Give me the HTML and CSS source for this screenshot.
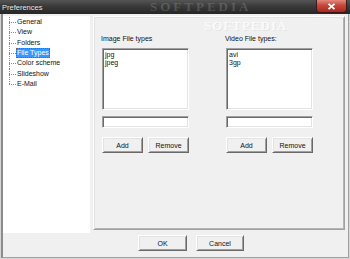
FILE: index.html
```html
<!DOCTYPE html>
<html>
<head>
<meta charset="utf-8">
<link rel="stylesheet" href="styles.css">
</head>
<body>
<div class="app">
  <div class="titlebar">
    <span class="title">Preferences</span>
    <span class="wm-title">SOFTPEDIA</span>
    <div class="close"><svg width="9" height="7" viewBox="0 0 9 7"><path d="M1.5 0.8 L7.5 6.2 M7.5 0.8 L1.5 6.2" stroke="#fff" stroke-width="1.8"/></svg></div>
  </div>
  <div class="frame">
    <div class="main">
      <ul class="tree">
        <li><span class="lbl">General</span></li>
        <li><span class="lbl">View</span></li>
        <li><span class="lbl">Folders</span></li>
        <li><span class="lbl sel">File Types</span></li>
        <li><span class="lbl">Color scheme</span></li>
        <li><span class="lbl">Slideshow</span></li>
        <li class="last"><span class="lbl">E-Mail</span></li>
      </ul>
      <div class="panel">
        <span class="wm-panel">SOFTPEDIA</span>
        <div class="group">
          <div class="label">Image File types</div>
          <div class="listbox"><div>jpg</div><div>jpeg</div></div>
          <div class="textbox"></div>
          <div class="btnrow"><div class="btn">Add</div><div class="btn">Remove</div></div>
        </div>
        <div class="group">
          <div class="label">Video File types:</div>
          <div class="listbox"><div>avi</div><div>3gp</div></div>
          <div class="textbox"></div>
          <div class="btnrow"><div class="btn">Add</div><div class="btn">Remove</div></div>
        </div>
      </div>
    </div>
    <div class="footer">
      <div class="btn ok">OK</div>
      <div class="btn cancel">Cancel</div>
    </div>
  </div>
</div>
</body>
</html>
```

FILE: styles.css
```css
* { box-sizing: border-box; }
html, body { margin: 0; padding: 0; }
body {
  width: 350px;
  height: 259px;
  overflow: hidden;
  font-family: "Liberation Sans", Arial, sans-serif;
  font-size: 7px;
  color: #111;
  background: #d6d6d6;
}
.app {
  width: 350px;
  height: 259px;
  display: flex;
  flex-direction: column;
  padding: 0 1px 1px 1px;
  background: #d6d6d6;
}
.titlebar {
  position: relative;
  height: 14px;
  margin: 0 -1px;
  flex: none;
  overflow: hidden;
  background: linear-gradient(to bottom, #555555 0%, #3a3a3a 45%, #262626 100%);
  display: flex;
  align-items: center;
}
.title {
  margin-left: 2px;
  font-size: 7.5px;
  color: #ececec;
  text-shadow: 0 0 2px rgba(0,0,0,0.6);
  position: relative;
  z-index: 2;
}
.wm-title {
  position: absolute;
  left: 150px;
  top: 0;
  height: 14px;
  line-height: 14px;
  font-family: "Liberation Serif", serif;
  font-weight: bold;
  font-size: 13px;
  letter-spacing: 3px;
  color: rgba(255,255,255,0.16);
}
.close {
  position: absolute;
  right: 3px;
  top: 0;
  width: 31px;
  height: 13px;
  border: 1px solid #3a1a1a;
  border-top: none;
  border-radius: 0 0 4px 4px;
  background: linear-gradient(to bottom, #e08a7a 0%, #c8463a 45%, #a8281e 100%);
  display: flex;
  align-items: center;
  justify-content: center;
}
.frame {
  flex: 1;
  display: flex;
  flex-direction: column;
  background: #f0f0f0;
  border-left: 2px solid #8c8c8c;
  border-right: 1px solid #a0a0a0;
  border-bottom: 1px solid #a0a0a0;
  padding-top: 2px;
}
.main {
  height: 217px;
  display: flex;
  align-items: flex-start;
}
.tree {
  list-style: none;
  margin: 0;
  padding: 1px 0 0 6px;
  width: 87px;
  height: 217px;
  background: #fff;
}
.tree li {
  height: 10.33px;
  line-height: 10.33px;
  padding-left: 8px;
  white-space: nowrap;
  background-image:
    repeating-linear-gradient(to bottom, #8a8a8a 0 1px, transparent 1px 2px),
    repeating-linear-gradient(to right, #8a8a8a 0 1px, transparent 1px 2px);
  background-repeat: no-repeat;
  background-position: 0 0, 0 5px;
  background-size: 1px 100%, 7px 1px;
}
.tree li.last {
  background-size: 1px 6px, 7px 1px;
}
.lbl {
  display: inline-block;
  height: 10px;
  line-height: 10px;
  padding: 0 1px;
  margin-left: -1px;
}
.lbl.sel {
  background: #3399ff;
  color: #fff;
  outline: 1px dotted #a8551a;
  outline-offset: -1px;
}
.panel {
  position: relative;
  margin-left: 3px;
  width: 252px;
  height: 214px;
  border: 1px solid;
  border-color: #ffffff #a0a0a0 #a0a0a0 #ffffff;
  box-shadow: inset 1px 1px 0 #e3e3e3, inset -1px -1px 0 #b4b4b4;
  padding: 17px 0 0 8px;
  display: flex;
  gap: 37px;
  align-items: flex-start;
}
.wm-panel {
  position: absolute;
  left: 110px;
  top: 3px;
  height: 11px;
  font-family: "Liberation Serif", serif;
  font-weight: bold;
  font-size: 13px;
  line-height: 11px;
  letter-spacing: 1px;
  color: rgba(255,255,255,0.8);
  text-shadow: 1px 1px 0 rgba(0,0,0,0.07);
}
.group {
  position: relative;
  width: 87px;
  display: flex;
  flex-direction: column;
}
.label {
  height: 9px;
  line-height: 9px;
  margin-left: -1px;
  margin-bottom: 5px;
  white-space: nowrap;
}
.listbox {
  height: 62px;
  background: #fff;
  border: 1px solid;
  border-color: #a0a0a0 #ffffff #ffffff #a0a0a0;
  box-shadow: inset 1px 1px 0 #696969, inset -1px -1px 0 #e3e3e3;
  padding: 2px 0 0 2px;
  line-height: 8px;
}
.textbox {
  margin-top: 6px;
  height: 12px;
  background: #fff;
  border: 1px solid;
  border-color: #a0a0a0 #ffffff #ffffff #a0a0a0;
  box-shadow: inset 1px 1px 0 #696969, inset -1px -1px 0 #e3e3e3;
}
.btnrow {
  margin-top: 9px;
  display: flex;
  gap: 5px;
}
.btn {
  height: 16px;
  width: 41px;
  display: flex;
  align-items: center;
  justify-content: center;
  background: #f0f0f0;
  border: 1px solid;
  border-color: #ffffff #696969 #696969 #ffffff;
  box-shadow: inset 1px 1px 0 #e3e3e3, inset -1px -1px 0 #a0a0a0;
  white-space: nowrap;
}
.footer {
  height: 24px;
  display: flex;
  gap: 9px;
  padding: 2px 0 0 135px;
}
.btn.ok { width: 49px; }
.btn.cancel { width: 48px; }
```
